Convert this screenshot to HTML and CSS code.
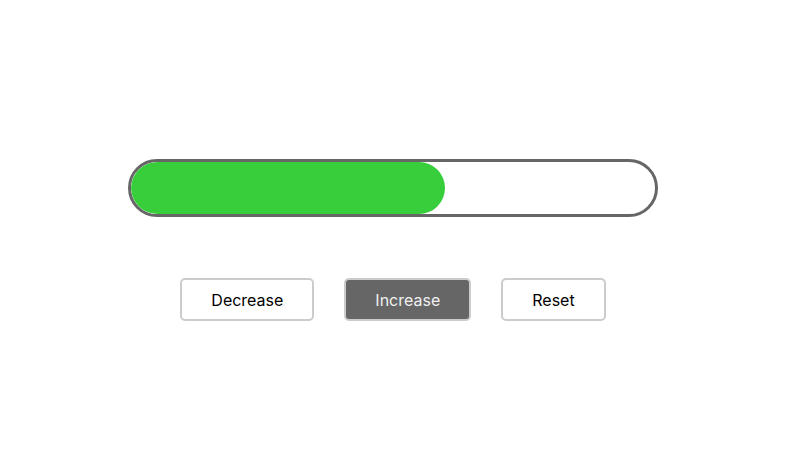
FILE: index.html
```html
<!DOCTYPE html>
<html>
<head>
<meta charset="utf-8">
<link rel="stylesheet" href="styles.css">
</head>
<body>
<main class="app">
  <div class="progress">
    <div class="progress-fill" style="width: 60%"></div>
  </div>
  <div class="controls">
    <button class="btn">Decrease</button>
    <button class="btn btn-active">Increase</button>
    <button class="btn">Reset</button>
  </div>
</main>
</body>
</html>
```
FILE: styles.css
```css
html, body {
  margin: 0;
  padding: 0;
  background: #fff;
}
body {
  font-family: Inter, "Noto Sans", sans-serif;
}
.app {
  width: 530px;
  margin: 159px 0 0 128px;
  display: flex;
  flex-direction: column;
  gap: 61px;
}
.progress {
  box-sizing: border-box;
  height: 58px;
  border: 3px solid #666;
  border-radius: 29px;
  background: #fff;
  overflow: hidden;
}
.progress-fill {
  height: 100%;
  background: #38cd3b;
  border-radius: 26px;
}
.controls {
  display: flex;
  justify-content: center;
  gap: 30px;
}
.btn {
  font-family: Inter, "Noto Sans", sans-serif;
  font-size: 16px;
  line-height: 19px;
  padding: 11px 29px 9px;
  border: 2px solid #ccc;
  border-radius: 5px;
  background: #fff;
  color: #000;
}
.btn-active {
  background: #666;
  color: #f0f0f0;
}
```
